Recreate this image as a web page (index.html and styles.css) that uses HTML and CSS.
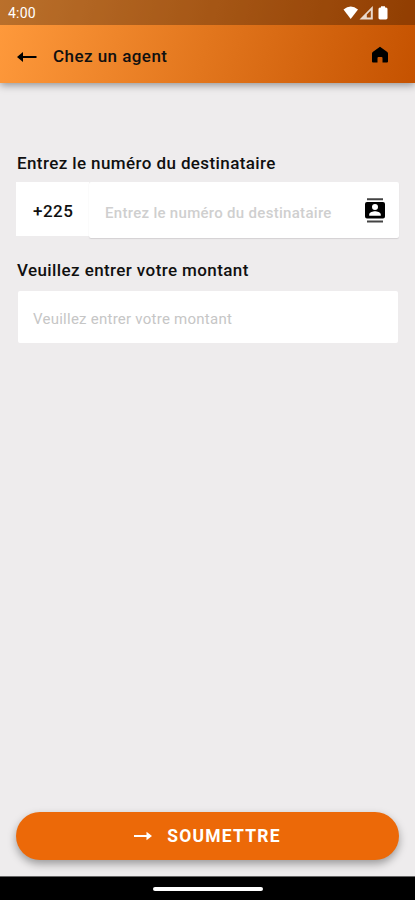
FILE: index.html
```html
<!DOCTYPE html>
<html lang="fr">
<head>
<meta charset="utf-8">
<meta name="viewport" content="width=device-width, initial-scale=1">
<title>Chez un agent</title>
<link rel="stylesheet" href="styles.css">
</head>
<body>
<div class="screen">
  <header class="header">
    <div class="status">
      <span class="time">4:00</span>
      <svg class="status-icons" width="46" height="16" viewBox="0 0 46 16" fill="#fff">
        <path d="M.5 4.400Q7.700-1.600 15 4.400L7.700 14z"/>
        <path fill-opacity=".8" fill-rule="evenodd" d="M16.500 14.500 29.800 1v13.500zM27.800 5.500v7h-4V9.500z"/>
        <path d="M38 1.200h4v1.400h1q1.500 0 1.500 1.500v9q0 1.400-1.500 1.400h-6q-1.500 0-1.500-1.400v-9q0-1.500 1.500-1.500h1z"/>
      </svg>
    </div>
    <div class="toolbar">
      <svg class="back" width="20" height="12" viewBox="0 0 20 12"><path d="M19.500 5H6V1L0 6l6 5V7h13.500z"/></svg>
      <h1 class="title">Chez un agent</h1>
      <svg class="home" width="18" height="18" viewBox="0 0 18 18"><path d="M9 .8 16.300 6q.7.500.7 1.500v8q0 1-1 1h-4.500V12q0-1-1-1h-3q-1 0-1 1v4.500H2q-1 0-1-1v-8Q1 6.500 1.700 6z"/></svg>
    </div>
  </header>
  <main class="form">
    <label class="label">Entrez le numéro du destinataire</label>
    <div class="phone">
      <div class="prefix">+225</div>
      <div class="number">
        <span class="hint">Entrez le numéro du destinataire</span>
        <svg class="contacts" width="20" height="25" viewBox="0 0 20 25">
          <path fill="#444" d="M2 .3h16v2H2zM2 22.500h16v2H2z"/>
          <path fill-rule="evenodd" d="M2 4h16q2 0 2 2v12.500q0 2-2 2H2q-2 0-2-2V6q0-2 2-2zM10 6a3 3 0 1 0 0 6a3 3 0 0 0 0-6zM4.200 17.800h11.600v-1.300c0-2-3.800-3.200-5.800-3.200s-5.800 1.200-5.800 3.200z"/>
        </svg>
      </div>
    </div>
    <label class="label label-amount">Veuillez entrer votre montant</label>
    <div class="amount">Veuillez entrer votre montant</div>
    <button class="submit" type="button">
      <svg width="18" height="10" viewBox="0 0 18 10" fill="#fff"><path d="M0 4.100h12.500V.7L18 5l-5.500 4.300V5.900H0z"/></svg>
      <span>SOUMETTRE</span>
    </button>
  </main>
  <footer class="nav"><span class="handle"></span></footer>
</div>
</body>
</html>
```
FILE: styles.css
```css
* { box-sizing: border-box; }
body { margin: 0; font-family: Roboto, "Liberation Sans", sans-serif; color: #101010; }
.screen { width: 100%; height: 900px; display: flex; flex-direction: column; background: #eeeced; overflow: hidden; }
.header { height: 83px; flex: none; background: linear-gradient(105deg, #ff9a3c 0%, #e2761d 50%, #c55200 100%); box-shadow: 0 2px 8px rgba(0,0,0,.4); }
.status { height: 25px; display: flex; align-items: center; justify-content: space-between; padding: 1px 26px 0 8px; background: rgba(0,0,0,.27); }
.time { color: #fff; font-size: 14px; line-height: 16px; letter-spacing: .2px; }
.status-icons { margin-top: -1px; }
.toolbar { height: 58px; display: flex; align-items: center; padding: 4px 26px 0 17px; }
.title { margin: 0 auto 0 16px; font-size: 17px; font-weight: 500; letter-spacing: .45px; line-height: 20px; }
.back { margin-top: 2px; }
.home { margin-top: -3px; }
.form { flex: 1; display: flex; flex-direction: column; padding: 70px 16px 16px; }
.label { font-size: 17px; font-weight: 500; letter-spacing: .4px; line-height: 20px; margin: 0 0 9px 1px; }
.phone { display: flex; height: 57px; }
.prefix { width: 73px; height: 54px; padding: 4px 0 0 17px; display: flex; align-items: center; background: #fff; font-size: 17px; font-weight: 500; letter-spacing: .5px; }
.number { flex: 1; height: 56px; display: flex; align-items: center; justify-content: space-between; padding: 0 14px 0 16px; background: #fff; border-radius: 2px; box-shadow: 0 1px 1px #d3d1d2; }
.hint { font-size: 15px; font-weight: 500; letter-spacing: .3px; color: #cfcfcf; padding-top: 5px; white-space: nowrap; }
.label-amount { margin-top: 21px; margin-bottom: 11px; }
.amount { height: 52px; margin: 0 1px 0 2px; padding: 3px 15px 0; display: flex; align-items: center; background: #fff; border-radius: 2px; font-size: 15px; letter-spacing: .25px; color: #c6c6c6; }
.submit { margin-top: auto; height: 48px; border: 0; border-radius: 24px; background: #ec6908; color: #fff; display: flex; align-items: center; justify-content: center; gap: 15px; font: 700 17.5px/20px Roboto, "Liberation Sans", sans-serif; letter-spacing: 1.2px; box-shadow: 0 4px 8px rgba(0,0,0,.35); }
.nav { height: 24px; flex: none; display: flex; align-items: center; justify-content: center; background: #000; border-top: 1px solid #666; }
.handle { width: 110px; height: 4px; border-radius: 2px; background: #fff; }
```
